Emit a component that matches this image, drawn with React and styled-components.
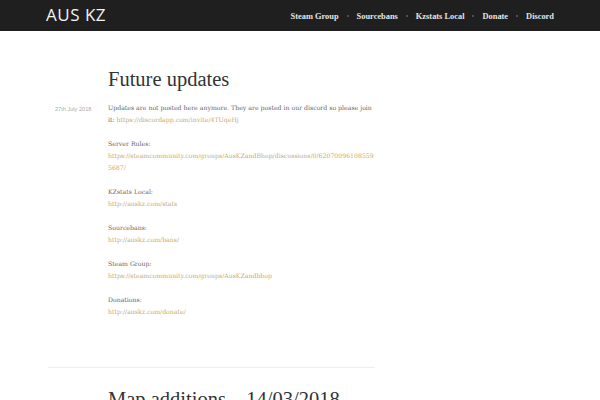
import React from "react";
import styled, { createGlobalStyle } from "styled-components";

const GlobalStyle = createGlobalStyle`
	html, body {
		margin: 0;
		padding: 0;
		background: #ffffff;
		overflow: hidden;
	}
`;

const navItems = ["Steam Group", "Sourcebans", "Kzstats Local", "Donate", "Discord"];

const links = [
	{ label: "Server Rules:", url: "https://steamcommunity.com/groups/AusKZandBhop/discussions/0/620700961085595687/" },
	{ label: "KZstats Local:", url: "http://auskz.com/stats" },
	{ label: "Sourcebans:", url: "http://auskz.com/bans/" },
	{ label: "Steam Group:", url: "https://steamcommunity.com/groups/AusKZandbhop" },
	{ label: "Donations:", url: "http://auskz.com/donate/" },
];

const App = () => {
	return (
		<>
			<GlobalStyle />
			<Header>
				<Logo>AUS KZ</Logo>
				<Nav>
					{navItems.map((item, i) => (
						<React.Fragment key={item}>
							{i > 0 && <Dot />}
							<NavLink>{item}</NavLink>
						</React.Fragment>
					))}
				</Nav>
			</Header>

			<Main>
				<Post>
					<Title>Future updates</Title>
					<PostRow>
						<DateCol>27th July 2018</DateCol>
						<Content>
							<P>
								Updates are not posted here anymore. They are posted in our discord so please join it:{" "}
								<A>https://discordapp.com/invite/4TUqeHj</A>
							</P>
							{links.map(l => (
								<P key={l.label}>
									{l.label}
									<br />
									<A>{l.url}</A>
								</P>
							))}
						</Content>
					</PostRow>
				</Post>
				<Separator />
				<Post>
					<Title>Map additions – 14/03/2018</Title>
				</Post>
			</Main>
		</>
	);
};
export default App;

const Header = styled.header`
	height: 31px;
	background: #1f1f1f;
	display: flex;
	align-items: center;
	justify-content: space-between;
	padding: 0 46px 0 46px;
`;

const Logo = styled.div`
	font-family: "Open Sans", "Liberation Sans", sans-serif;
	font-size: 17px;
	font-weight: 400;
	letter-spacing: 0.5px;
	color: #f2f2f2;
	line-height: 1;
	margin-top: -2px;
`;

const Nav = styled.nav`
	display: flex;
	align-items: center;
	gap: 8px;
	margin-right: 0;
	margin-top: 1px;
`;

const NavLink = styled.span`
	font-family: "Liberation Serif", "DejaVu Serif", serif;
	font-size: 8.4px;
	font-weight: 700;
	color: #e4e4e4;
`;

const Dot = styled.span`
	width: 2px;
	height: 2px;
	border-radius: 50%;
	background: #5e5e5e;
`;

const Main = styled.main`
	padding: 36px 0 0 48px;
	width: 327px;
`;

const Post = styled.article`
	padding-left: 60px;
`;

const Title = styled.h1`
	margin: 0 0 11px;
	font-family: "Liberation Serif", "DejaVu Serif", serif;
	font-weight: 400;
	font-size: 20.5px;
	line-height: 24px;
	color: #333333;
`;

const PostRow = styled.div`
	display: flex;
	margin-left: -53px;
`;

const DateCol = styled.div`
	width: 53px;
	flex-shrink: 0;
	font-family: "Liberation Sans", sans-serif;
	font-size: 5.6px;
	line-height: 12px;
	padding-top: 1px;
	color: #aaaaaa;
`;

const Content = styled.div`
	width: 270px;
`;

const P = styled.p`
	margin: 0 0 12px;
	font-family: "DejaVu Serif", "Liberation Serif", serif;
	font-size: 6.2px;
	line-height: 12px;
	color: #666666;
	overflow-wrap: anywhere;
`;

const A = styled.a`
	color: #c4aa72;
	text-decoration: none;
`;

const Separator = styled.hr`
	border: 0;
	border-top: 1px solid #eeeeee;
	margin: 37px 0 19px 0;
`;
